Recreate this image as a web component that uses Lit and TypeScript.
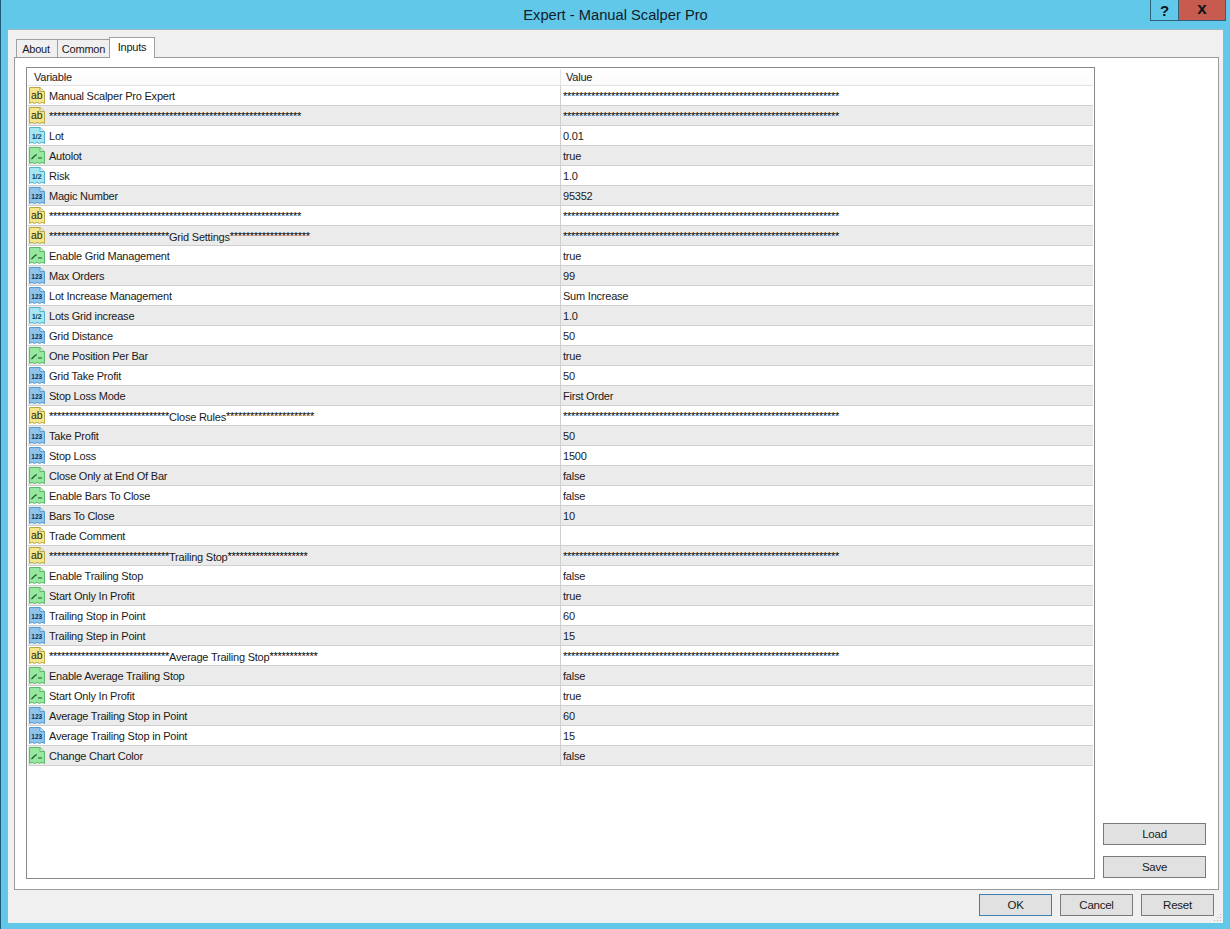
import { LitElement, html, css, svg } from "lit";
import { customElement } from "lit/decorators.js";

type Kind = "ab" | "half" | "bool" | "num";
const s = (n: number) => "*".repeat(n);
const V = s(69);
const N = s(63);
const rows: [Kind, string, string][] = [
  ["ab", "Manual Scalper Pro Expert", V],
  ["ab", N, V],
  ["half", "Lot", "0.01"],
  ["bool", "Autolot", "true"],
  ["half", "Risk", "1.0"],
  ["num", "Magic Number", "95352"],
  ["ab", N, V],
  ["ab", s(30) + "Grid Settings" + s(20), V],
  ["bool", "Enable Grid Management", "true"],
  ["num", "Max Orders", "99"],
  ["num", "Lot Increase Management", "Sum Increase"],
  ["half", "Lots Grid increase", "1.0"],
  ["num", "Grid Distance", "50"],
  ["bool", "One Position Per Bar", "true"],
  ["num", "Grid Take Profit", "50"],
  ["num", "Stop Loss Mode", "First Order"],
  ["ab", s(30) + "Close Rules" + s(22), V],
  ["num", "Take Profit", "50"],
  ["num", "Stop Loss", "1500"],
  ["bool", "Close Only at End Of Bar", "false"],
  ["bool", "Enable Bars To Close", "false"],
  ["num", "Bars To Close", "10"],
  ["ab", "Trade Comment", ""],
  ["ab", s(30) + "Trailing Stop" + s(20), V],
  ["bool", "Enable Trailing Stop", "false"],
  ["bool", "Start Only In Profit", "true"],
  ["num", "Trailing Stop in Point", "60"],
  ["num", "Trailing Step in Point", "15"],
  ["ab", s(30) + "Average Trailing Stop" + s(12), V],
  ["bool", "Enable Average Trailing Stop", "false"],
  ["bool", "Start Only In Profit", "true"],
  ["num", "Average Trailing Stop in Point", "60"],
  ["num", "Average Trailing Stop in Point", "15"],
  ["bool", "Change Chart Color", "false"],
];

const palette: Record<Kind, [string, string, string]> = {
  ab: ["#f5e68c", "#b9a94a", "#2a2405"],
  half: ["#a6e6f2", "#58b4cc", "#0a4a66"],
  bool: ["#96e8a0", "#5cb868", "#14591c"],
  num: ["#8fc3ea", "#5a9bcf", "#0a2f58"],
};

function icon(k: Kind) {
  const [fill, stroke, ink] = palette[k];
  const body = "M0.5 0.5H11L15.5 4.5V16.5L13 15.3L10.5 16.5L8 15.3L5.5 16.5L3 15.3L0.5 16.5Z";
  const inner =
    k === "ab"
      ? svg`<text x="7.8" y="12" text-anchor="middle" class="it ab" fill=${ink}>ab</text>`
      : k === "num"
        ? svg`<text x="7.8" y="12" text-anchor="middle" class="it n" fill=${ink}>123</text>`
        : k === "half"
          ? svg`<text x="7.5" y="12" text-anchor="middle" class="it h" fill=${ink}>1/2</text>`
          : svg`<path d="M2.5 12L6.5 8H8M9 11H13" fill="none" stroke=${ink} stroke-width="1.2"/>`;
  return svg`<svg class="ico" width="16" height="17" viewBox="0 0 16 17">
    <path d=${body} fill=${fill} stroke=${stroke}/>
    <path d="M11 0.5V4.5H15.5" fill="#fff" fill-opacity=".6" stroke=${stroke}/>
    ${inner}</svg>`;
}

/* Asterisk runs keep a fixed 4px pitch. */
function label(text: string) {
  if (!text.includes("*")) return text;
  return text
    .split(/(\*+)/)
    .filter(Boolean)
    .map((p) => (p[0] === "*" ? html`<span class="st">${p}</span>` : p));
}

@customElement("app-root")
export class AppRoot extends LitElement {
  static styles = css`
    :host {
      display: flex;
      flex-direction: column;
      width: 1230px;
      height: 929px;
      box-sizing: border-box;
      background: #62c8ea;
      border-left: 1px solid #1e5a78;
      font-family: "Liberation Sans", Arial, sans-serif;
      font-size: 11px;
      letter-spacing: -0.22px;
      color: #1a1a1a;
      position: relative;
      overflow: hidden;
      padding: 0 7px 6px 7px;
    }
    .title {
      height: 29px;
      flex: none;
      display: flex;
      align-items: center;
      justify-content: center;
      font-size: 14.7px;
      letter-spacing: 0;
      color: #10202a;
    }
    .caps {
      position: absolute;
      top: 0;
      right: 4px;
      display: flex;
      height: 20px;
      border: 1px solid #2f6178;
      border-top: none;
    }
    .cap {
      display: flex;
      align-items: center;
      justify-content: center;
      font-weight: bold;
      font-size: 15px;
      letter-spacing: 0;
      color: #0c1420;
    }
    .cap.help { width: 27px; border-right: 1px solid #2f6178; }
    .cap.close { width: 46px; background: #c75b4f; font-size: 17px; padding-bottom: 3px; box-sizing: border-box; }
    .client {
      flex: 1;
      min-height: 0;
      background: #f0f0f0;
      padding: 9px 4px 0 6px;
      display: flex;
      flex-direction: column;
      border-top: 1px solid #9fb9c4;
      position: relative;
    }
    .grip { position: absolute; right: 1px; bottom: 1px; }
    .tabs {
      display: flex;
      height: 18px;
      flex: none;
      padding-left: 2px;
      position: relative;
      z-index: 1;
    }
    .tab {
      border: 1px solid #a0a0a0;
      border-bottom: none;
      padding-top: 3px;
      text-align: center;
      box-sizing: border-box;
      height: 18px;
      background: #f0f0f0;
      margin-right: -1px;
      font-size: 11px;
    }
    .tab.about { width: 42px; padding-right: 2px; }
    .tab.common { width: 53px; }
    .tab.inputs {
      width: 46px;
      height: 21px;
      margin-top: -2px;
      padding-top: 3px;
      background: #fff;
    }
    .panel {
      flex: none;
      height: 833px;
      box-sizing: border-box;
      background: #fff;
      border: 1px solid #9a9a9a;
      padding: 9px 10px 10px 11px;
      display: flex;
      gap: 8px;
    }
    .list {
      width: 1069px;
      flex: none;
      box-sizing: border-box;
      border: 1px solid #8a8a8a;
      background: #fff;
      display: flex;
      flex-direction: column;
      padding: 1px;
    }
    .head, .row {
      display: grid;
      grid-template-columns: 532px 1fr;
    }
    .head {
      height: 16px;
      border-bottom: 1px solid #e2e2e2;
      background: linear-gradient(#fff, #fafafa);
    }
    .head div { padding: 1px 0 0 6px; line-height: 14px; }
    .head div + div { border-left: 1px solid #e2e2e2; padding-left: 5px; }
    .row {
      height: 20px;
      box-sizing: border-box;
      border-bottom: 1px solid #cfcfcf;
      line-height: 21px;
    }
    .row.alt { background: #ebebeb; }
    .name {
      display: flex;
      align-items: center;
      gap: 4px;
      padding-left: 1px;
      white-space: nowrap;
      overflow: hidden;
    }
    .name span.lb { height: 19px; line-height: 21px; }
    .val {
      border-left: 1px solid #cfcfcf;
      padding-left: 2px;
      white-space: nowrap;
      overflow: hidden;
    }
    .st { letter-spacing: -0.28px; color: #000; vertical-align: 1px; }
    .ico { flex: none; }
    .it { font-family: "Liberation Sans", Arial, sans-serif; letter-spacing: 0; }
    .it.ab { font-size: 10.5px; }
    .it.n { font-size: 6.5px; font-weight: bold; }
    .it.h { font-size: 7.5px; font-weight: bold; letter-spacing: -0.3px; }
    .side {
      flex: 1;
      display: flex;
      flex-direction: column;
      justify-content: flex-end;
      gap: 11px;
      padding-right: 2px;
      padding-bottom: 1px;
    }
    .btn {
      box-sizing: border-box;
      height: 22px;
      background: #e1e1e1;
      border: 1px solid #7a7a7a;
      display: flex;
      align-items: center;
      justify-content: center;
      color: #1a1a1a;
      font-size: 11.5px;
      letter-spacing: -0.25px;
      padding-bottom: 1px;
    }
    .foot {
      flex: 1;
      display: flex;
      justify-content: flex-end;
      align-items: flex-start;
      padding-top: 4px;
      padding-right: 5px;
      gap: 8px;
    }
    .foot .btn { width: 73px; }
    .foot .ok { border-color: #3f7fb0; }
  `;

  render() {
    return html`
      <div class="title">Expert - Manual Scalper Pro</div>
      <div class="caps"><div class="cap help">?</div><div class="cap close">x</div></div>
      <div class="client">
        <div class="tabs">
          <div class="tab about">About</div>
          <div class="tab common">Common</div>
          <div class="tab inputs">Inputs</div>
        </div>
        <div class="panel">
          <div class="list">
            <div class="head"><div>Variable</div><div>Value</div></div>
            ${rows.map(
              (r, i) => html`<div class="row ${i % 2 ? "alt" : ""}">
                <div class="name">${icon(r[0])}<span class="lb">${label(r[1])}</span></div>
                <div class="val">${label(r[2])}</div>
              </div>`,
            )}
          </div>
          <div class="side">
            <div class="btn">Load</div>
            <div class="btn">Save</div>
          </div>
        </div>
        <div class="foot">
          <div class="btn ok">OK</div>
          <div class="btn">Cancel</div>
          <div class="btn">Reset</div>
        </div>
        <svg class="grip" width="8" height="8" viewBox="0 0 8 8" fill="#b4b4b4">
          <rect x="6" y="0" width="1" height="1"/>
          <rect x="3" y="3" width="1" height="1"/><rect x="6" y="3" width="1" height="1"/>
          <rect x="0" y="6" width="1" height="1"/><rect x="3" y="6" width="1" height="1"/><rect x="6" y="6" width="1" height="1"/>
        </svg>
      </div>
    `;
  }
}
